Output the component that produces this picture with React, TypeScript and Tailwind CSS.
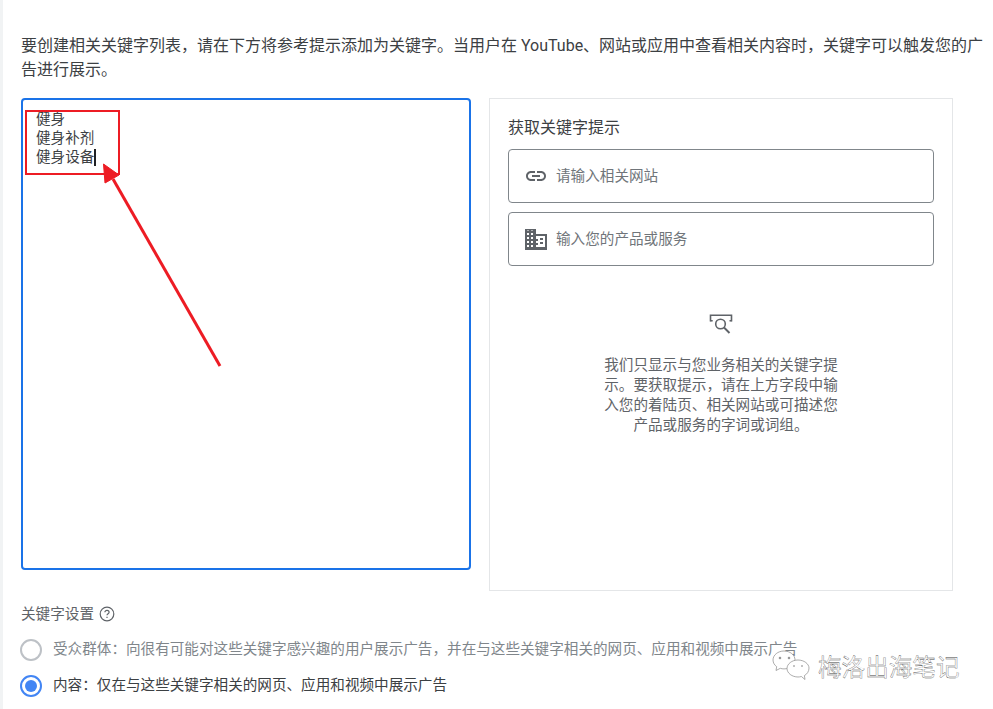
import React from "react";

const font = { fontFamily: '"Roboto", "Noto Sans CJK SC", sans-serif' };

function LinkIcon() {
  return (
    <svg width="24" height="24" viewBox="0 0 24 24" fill="#5f6368" className="shrink-0">
      <path d="M3.9 12c0-1.71 1.39-3.1 3.1-3.1h4V7H7c-2.76 0-5 2.24-5 5s2.240 5 5 5h4v-1.9H7c-1.71 0-3.1-1.39-3.1-3.1zM8 13h8v-2H8v2zm9-6h-4v1.9h4c1.71 0 3.1 1.39 3.1 3.100s-1.39 3.1-3.1 3.1h-4V17h4c2.76 0 5-2.24 5-5s-2.24-5-5-5z" />
    </svg>
  );
}

function BuildingIcon() {
  return (
    <svg width="24" height="24" viewBox="0 0 24 24" fill="#5f6368" className="shrink-0">
      <path d="M12 7V2H1v21h22V7H12zM5 20H3v-2h2v2zm0-4H3v-2h2v2zm0-4H3v-2h2v2zm0-4H3V6h2v2zm0-4H3V3.500h2V4zm4 16H7v-2h2v2zm0-4H7v-2h2v2zm0-4H7v-2h2v2zm0-4H7V6h2v2zm0-4H7V3.500h2V4zm12 16h-9v-2h2v-2h-2v-2h2v-2h-2V9h9v11zm-2-9h-3v2h3v-2zm0 4h-3v2h3v-2z" />
    </svg>
  );
}

function SearchFrameIcon() {
  return (
    <svg width="26" height="26" viewBox="0 0 26 26" fill="none" stroke="#5f6368" strokeWidth="1.6">
      <path d="M2.500 9.500V3.200h21v6.300" />
      <path d="M2.500 8.800h2.200M21.500 8.800h2" />
      <circle cx="12.500" cy="12" r="4.800" />
      <path d="M16 15.500l5.500 5.500" strokeWidth="2" />
    </svg>
  );
}

function SuggestionInput({ icon, label }: { icon: React.ReactNode; label: string }) {
  return (
    <div className="flex h-[54px] items-center gap-[8px] rounded-[4px] border border-[#80868b] pl-[15px]">
      {icon}
      <span className="pt-[2px] text-[14.600px] text-[#70757a]">{label}</span>
    </div>
  );
}

export default function App() {
  return (
    <div className="flex h-[709px] w-[993px] overflow-hidden bg-white" style={font}>
      <div className="w-[3px] shrink-0 bg-[#f1f3f4]" />
      <main className="relative w-[990px] pl-[18px] pt-[34px]">
        <p className="w-[966px] text-[16px] leading-[24px] text-[#3c4043]">
          要创建相关关键字列表，请在下方将参考提示添加为关键字。当用户在 YouTube、网站或应用中查看相关内容时，关键字可以触发您的广告进行展示。
        </p>

        <div className="mt-[16px] flex items-start gap-[18px]">
          <div className="h-[472px] w-[450px] rounded-[4px] border-2 border-[#1a73e8] pl-[13px] pt-[10px] text-[14.600px] leading-[19px] text-[#3c4043]">
            <div>健身</div>
            <div>健身补剂</div>
            <div className="flex items-center">
              健身设备
              <span className="h-[17px] w-[2px] bg-[#202124]" />
            </div>
          </div>

          <section className="flex h-[493px] w-[464px] flex-col border border-[#e4e6e8] px-[18px] pt-[19px]">
            <h2 className="text-[16px] font-normal leading-[20px] text-[#3c4043]">获取关键字提示</h2>
            <div className="mt-[11px] flex flex-col gap-[9px]">
              <SuggestionInput icon={<LinkIcon />} label="请输入相关网站" />
              <SuggestionInput icon={<BuildingIcon />} label="输入您的产品或服务" />
            </div>
            <div className="mt-[46px] flex flex-col items-center">
              <SearchFrameIcon />
              <p className="mt-[17px] w-[238px] text-center text-[14.600px] leading-[20px] text-[#5f6368]">
                我们只显示与您业务相关的关键字提示。要获取提示，请在上方字段中输入您的着陆页、相关网站或可描述您产品或服务的字词或词组。
              </p>
            </div>
          </section>
        </div>

        <div className="mt-[13px] flex items-center gap-[5px] text-[14.600px] leading-[20px] text-[#5f6368]">
          关键字设置
          <svg width="16" height="16" viewBox="0 0 16 16" fill="none" stroke="#5f6368" strokeWidth="1.200">
            <circle cx="8" cy="8" r="6.800" />
            <path d="M5.900 6.300c0-1.200 1-2 2.100-2s2.100.8 2.100 1.900c0 1.500-2.100 1.500-2.100 3.100" />
            <path d="M8 10.800v1.300" />
          </svg>
        </div>

        <div className="-ml-[1px] mt-[14px] flex h-[24px] items-center gap-[11px] whitespace-nowrap text-[14.600px] text-[#80868b]">
          <span className="h-[22px] w-[22px] shrink-0 rounded-full border-2 border-[#bdc1c6]" />
          受众群体：向很有可能对这些关键字感兴趣的用户展示广告，并在与这些关键字相关的网页、应用和视频中展示广告
        </div>

        <div className="-ml-[1px] mt-[12px] flex h-[24px] items-center gap-[11px] whitespace-nowrap text-[14.600px] text-[#3c4043]">
          <span className="flex h-[22px] w-[22px] shrink-0 items-center justify-center rounded-full border-2 border-[#4285f4]">
            <span className="h-[12px] w-[12px] rounded-full bg-[#4285f4]" />
          </span>
          内容：仅在与这些关键字相关的网页、应用和视频中展示广告
        </div>

        {/* Annotations drawn over the screenshot */}
        <div className="absolute left-[22px] top-[110px] h-[65px] w-[95px] border-2 border-[#ed1c24]" />
        <svg className="absolute left-[87px] top-[150px]" width="150" height="230" viewBox="0 0 150 230">
          <path d="M130 216L23 29" stroke="#ed1c24" strokeWidth="3" />
          <path d="M13.500 14L29 25L15 33Z" fill="#ed1c24" stroke="#ed1c24" strokeWidth="1" />
        </svg>

        {/* WeChat watermark */}
        <div className="absolute left-[769px] top-[650px] flex items-center gap-[8px]">
          <svg width="38" height="31" viewBox="0 0 38 31" fill="#ffffff" stroke="#8a8a8a" strokeWidth="0.700">
            <path d="M12 1C6 1 1 5 1 10c0 2.800 1.500 5.100 3.700 6.700L4 20.500l4.300-2.200c1.200.4 2.400.6 3.700.6 6 0 11-4 11-9S18 1 12 1z" />
            <path d="M26 10c-6 0-11 3.900-11 8.500S20 27 26 27c1.200 0 2.300-.2 3.400-.5l3.600 3-.6-3.900c2.800-1.600 4.600-4.300 4.600-7.600C37 13.900 32 10 26 10z" />
            <circle cx="8" cy="8" r="0.900" fill="#8a8a8a" />
            <circle cx="17" cy="8" r="0.900" fill="#8a8a8a" />
            <path d="M21 16h2M29 16h2" strokeWidth="1.100" />
          </svg>
          <span
            className="text-[23.600px] leading-[30px] text-white"
            style={{ WebkitTextStroke: "0.300px #444444", fontFamily: '"Noto Sans CJK SC", sans-serif' }}
          >
            梅洛出海笔记
          </span>
        </div>
      </main>
    </div>
  );
}
